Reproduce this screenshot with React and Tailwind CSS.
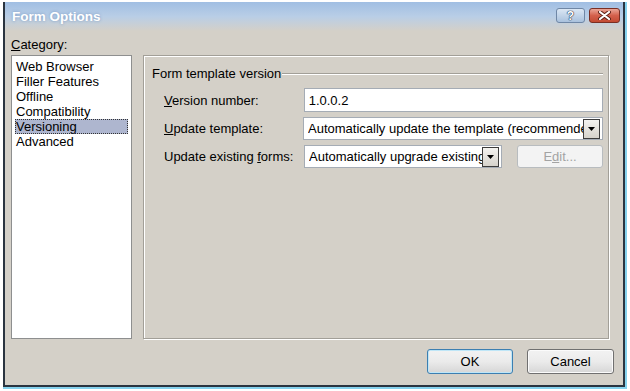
import React from 'react';

function ArrowButton() {
  return (
    <div className="w-[17px] h-[20px] shrink-0 border border-[#3c3c3c] bg-gradient-to-b from-[#f4f3f0] to-[#d6d3cc] flex items-center justify-center">
      <svg width="7" height="4" viewBox="0 0 7 4">
        <path d="M0 0 H7 L3.5 4 Z" fill="#000" />
      </svg>
    </div>
  );
}

function Select({ text, className }) {
  return (
    <div className={`h-[23px] bg-white border border-[#a5acb5] flex items-center pl-[4px] pr-[2px] ${className}`}>
      <span className="flex-1 min-w-0 overflow-hidden whitespace-nowrap">{text}</span>
      <ArrowButton />
    </div>
  );
}

export default function App() {
  const categories = ['Web Browser', 'Filler Features', 'Offline', 'Compatibility', 'Versioning', 'Advanced'];

  return (
    <div
      className="w-[630px] h-[391px] bg-white pt-[2px] pl-[3px] text-[13px] text-black leading-[15px]"
      style={{ fontFamily: '"Liberation Sans", Arial, sans-serif' }}
    >
      <div className="w-[624px] h-[387px] border-r-2 border-b-2 border-[#86d2ee]">
        <div className="h-full border-l-2 border-r-2 border-b-2 border-[#2a3440] bg-[#d4d0c8] flex flex-col">
          {/* Title bar */}
          <div className="h-[29px] shrink-0 bg-gradient-to-b from-[#a0bee3] via-[#b9cee6] to-[#d4d0c8] flex items-start pl-[7px] pr-[3px]">
            <div className="flex-1 pt-[7px] text-[13.5px] font-bold text-white [text-shadow:0_0_3px_rgba(110,145,190,0.9)]">
              Form Options
            </div>
            <div className="flex gap-[4px] mt-[6px]">
              <div className="w-[29px] h-[15px] rounded-[3px] border border-[#6f87a6] bg-gradient-to-b from-[#dbe7f4] to-[#a9c1dd] flex items-center justify-center text-[12px] font-bold text-white leading-none [text-shadow:0_0_1px_#1c2e4a,0_0_1px_#1c2e4a,0_0_1px_#1c2e4a]">
                ?
              </div>
              <div className="w-[31px] h-[15px] rounded-[3px] border border-[#7a2f24] bg-gradient-to-b from-[#e9a597] via-[#d4604c] to-[#c24a33] flex items-center justify-center">
                <svg width="13" height="9" viewBox="0 0 13 9">
                  <path d="M2 1 L11 8 M11 1 L2 8" stroke="#5a1e14" strokeWidth="4" strokeLinecap="round" />
                  <path d="M2 1 L11 8 M11 1 L2 8" stroke="#fff" strokeWidth="2.2" strokeLinecap="round" />
                </svg>
              </div>
            </div>
          </div>

          {/* Body */}
          <div className="flex-1 flex flex-col pl-[6px] pt-[6px]">
            <div className="h-[18px]">
              <span className="underline underline-offset-1">C</span>ategory:
            </div>
            <div className="flex gap-[11px] h-[285px]">
              {/* Category list */}
              <div className="w-[121px] h-[284px] bg-white border border-[#8e8f8f] pt-[3px] px-[3px]">
                {categories.map((c) => (
                  <div
                    key={c}
                    className={`h-[15px] leading-[15px] pl-[1px] whitespace-nowrap ${
                      c === 'Versioning' ? 'bg-[#aeb6cf] outline outline-1 outline-dotted outline-[#333] -outline-offset-1' : ''
                    }`}
                  >
                    {c}
                  </div>
                ))}
              </div>

              {/* Settings panel */}
              <div className="w-[466px] h-[284px] border border-[#a29f98] shadow-[inset_1px_1px_0_#fff,1px_1px_0_#fff] pl-[8px] pr-[5px] pt-[10px]">
                <div className="flex items-center gap-[1px]">
                  <span className="whitespace-nowrap">Form template version</span>
                  <div className="flex-1 h-[2px] border-t border-[#a29f98] border-b border-b-white" />
                </div>
                <div className="mt-[7px] pl-[12px] flex flex-col gap-[5px]">
                  <div className="flex items-center">
                    <div className="w-[140px]">
                      <span className="underline underline-offset-1">V</span>ersion number:
                    </div>
                    <div className="w-[300px] h-[24px] bg-white border border-[#a5acb5] flex items-center pl-[4px]">
                      1.0.0.2
                    </div>
                  </div>
                  <div className="flex items-center">
                    <div className="w-[140px]">
                      <span className="underline underline-offset-1">U</span>pdate template:
                    </div>
                    <Select className="w-[300px]" text="Automatically update the template (recommended)" />
                  </div>
                  <div className="flex items-center">
                    <div className="w-[140px]">
                      Update existing <span className="underline underline-offset-1">f</span>orms:
                    </div>
                    <Select className="w-[198px]" text="Automatically upgrade existing forms" />
                    <div className="ml-[15px] w-[86px] h-[23px] rounded-[3px] border border-[#b8bcbf] bg-[#f3f3f3] flex items-center justify-center text-[#a3a3a3]">
                      E<span className="underline underline-offset-1">d</span>it...
                    </div>
                  </div>
                </div>
              </div>
            </div>

            {/* Buttons */}
            <div className="flex gap-[14px] mt-[9px] pl-[416px]">
              <div className="w-[86px] h-[25px] rounded-[3px] border border-[#3c7fb1] shadow-[inset_0_0_0_1px_#bfe6f7] bg-gradient-to-b from-[#f2f2f2] via-[#ebebeb] to-[#d6d6d6] flex items-center justify-center">
                OK
              </div>
              <div className="w-[87px] h-[25px] rounded-[3px] border border-[#707070] shadow-[inset_0_0_0_1px_#fbfbfb] bg-gradient-to-b from-[#f2f2f2] via-[#ebebeb] to-[#d6d6d6] flex items-center justify-center">
                Cancel
              </div>
            </div>
          </div>
        </div>
      </div>
    </div>
  );
}
